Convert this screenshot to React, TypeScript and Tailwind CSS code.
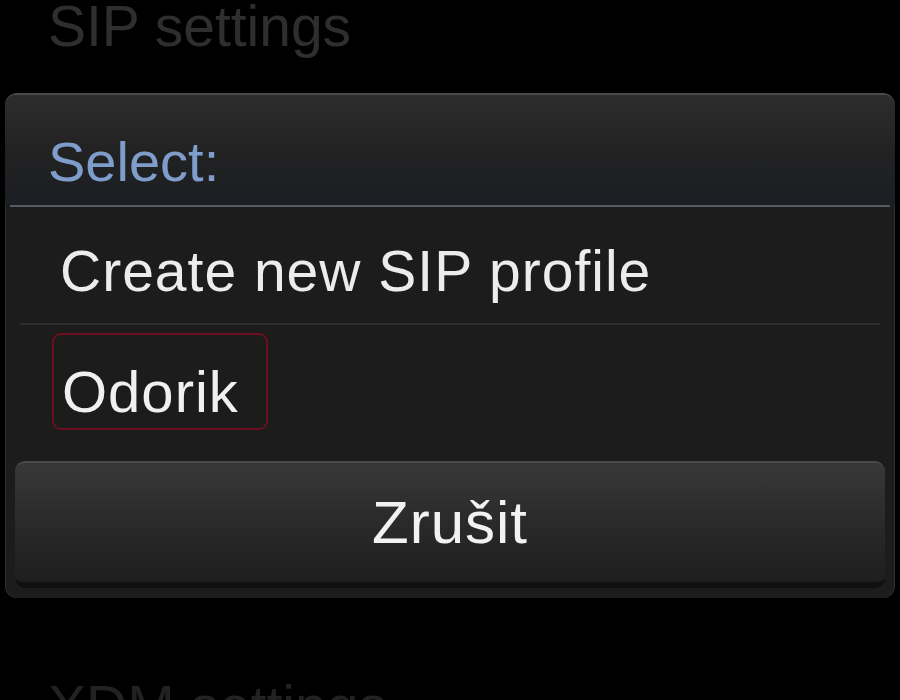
export default function App() {
  return (
    <div className="w-[900px] h-[700px] overflow-hidden bg-black font-['Liberation_Sans',Arial,sans-serif]">
      {/* page title behind the dialog */}
      <div className="h-[95px] pl-[48px]">
        <div className="-mt-[2px] text-[57px] leading-[57px] text-[#2e2e2e]">SIP settings</div>
      </div>

      {/* dialog */}
      <div className="mx-[5px] h-[505px] rounded-[12px] border-t-2 border-[#4a4a4a] bg-[#1c1c1c] shadow-[inset_1px_0_0_#2e2e2e,inset_-1px_0_0_#2e2e2e] flex flex-col">
        <div className="h-[110px] rounded-t-[10px] bg-gradient-to-b from-[#2d2d2d] via-[#222222] to-[#1b1e23] pl-[43px] pt-[39px]">
          <div className="text-[56px] leading-[56px] text-[#7f9dcb]">Select:</div>
        </div>
        <div className="mx-[5px] h-[2px] bg-[#585c61]" />

        <div className="h-[116px] pl-[55px] pt-[36px]">
          <div className="text-[57px] leading-[56px] tracking-[1px] text-[#ececec]">Create new SIP profile</div>
        </div>
        <div className="mx-[15px] h-[2px] bg-[#2e2e2e]" />

        <div className="h-[131px] pt-[8px] pl-[47px]">
          <div className="w-[216px] h-[97px] rounded-[9px] border-2 border-[#6c1020] pl-[8px] pt-[29px]">
            <div className="text-[58px] leading-[56px] tracking-[1px] text-[#f0f0f0]">Odorik</div>
          </div>
        </div>

        <div className="mt-[5px] mx-[10px] h-[127px] rounded-[10px] border-t-2 border-[#4a4a4a] border-b-[6px] border-b-[#101010] bg-gradient-to-b from-[#383838] via-[#2a2a2a] to-[#1e1e1e] flex items-center justify-center">
          <div className="text-[60px] leading-[60px] tracking-[1px] text-[#f2f2f2]">Zrušit</div>
        </div>
      </div>

      {/* next list item, cut off at the bottom */}
      <div className="mt-[80px] pl-[48px] text-[57px] leading-[57px] text-[#222222]">XDM settings</div>
    </div>
  );
}
